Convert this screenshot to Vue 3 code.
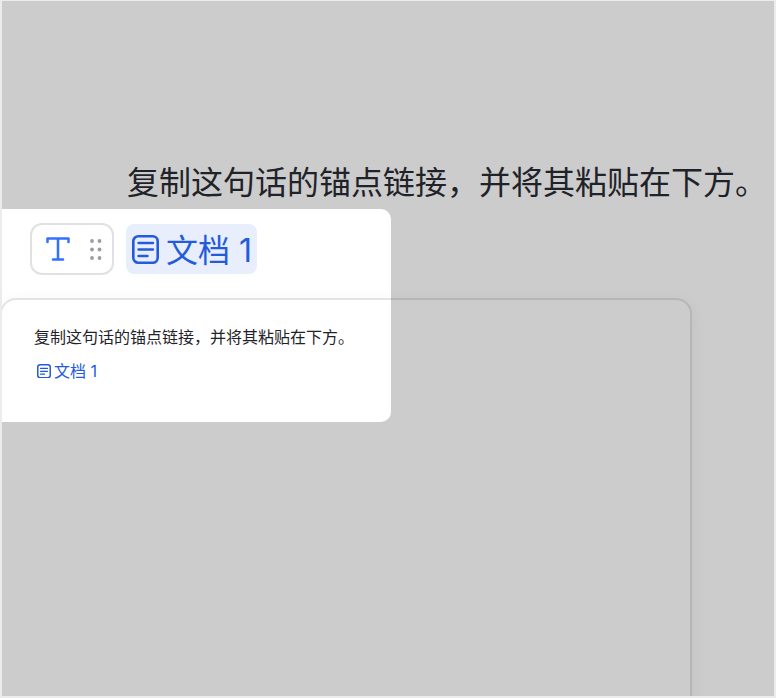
<template>
  <main class="page">
    <div class="stage">
      <h1 class="headline">复制这句话的锚点链接&#xFF0C;并将其粘贴在下方。</h1>

      <section class="spotlight">
        <div class="tools">
          <div class="handle">
            <svg class="t-icon" viewBox="0 0 24 24" fill="none">
              <path d="M1.5 5V1.5H22.5V5M12 1.5V22.5M7 22.5H17" stroke="currentColor" stroke-width="2.5" stroke-linecap="round" stroke-linejoin="round" />
            </svg>
            <svg class="dots" viewBox="0 0 12 21" fill="currentColor">
              <circle cx="2" cy="2" r="1.9" />
              <circle cx="9.5" cy="2" r="1.9" />
              <circle cx="2" cy="10.5" r="1.9" />
              <circle cx="9.5" cy="10.5" r="1.9" />
              <circle cx="2" cy="19" r="1.9" />
              <circle cx="9.5" cy="19" r="1.9" />
            </svg>
          </div>
          <a class="doc-chip">
            <svg class="doc-big" viewBox="0 0 27 29" fill="none">
              <rect x="1.3" y="1.3" width="24.4" height="26.4" rx="5" stroke="currentColor" stroke-width="2.6" />
              <path d="M6.5 8H21M6.5 14.5H21M6.5 21H15.5" stroke="currentColor" stroke-width="2.4" stroke-linecap="round" />
            </svg>
            <span class="doc-label">文档 1</span>
          </a>
        </div>
      </section>

      <section class="panel">
        <p class="panel-text">复制这句话的锚点链接&#xFF0C;并将其粘贴在下方。</p>
        <a class="panel-link">
          <svg class="doc-small" viewBox="0 0 14 14.5" fill="none">
            <rect x="0.75" y="0.75" width="12.5" height="13" rx="2.5" stroke="currentColor" stroke-width="1.5" />
            <path d="M3.5 4.4H10.5M3.5 7.3H10.5M3.5 10.2H7.5" stroke="currentColor" stroke-width="1.3" stroke-linecap="round" />
          </svg>
          <span>文档 1</span>
        </a>
      </section>
    </div>
  </main>
</template>

<script setup>
</script>

<style>
html,
body {
  margin: 0;
  background: #ececec;
}
</style>

<style scoped>
.page {
  box-sizing: border-box;
  width: 776px;
  height: 698px;
  padding: 1px 2px 2px 2px;
  font-family: "Inter", "Noto Sans CJK SC", sans-serif;
}

.stage {
  position: relative;
  height: 100%;
  overflow: hidden;
  background: #cccccc;
}

.headline {
  margin: 0;
  padding: 160px 0 0 125px;
  font-size: 32px;
  line-height: 44px;
  font-weight: 400;
  white-space: nowrap;
  color: #1f2329;
}

.spotlight {
  position: absolute;
  left: 0;
  top: 208px;
  width: 389px;
  height: 213px;
  border-radius: 0 10px 10px 0;
  background: #ffffff;
}

.tools {
  display: flex;
  align-items: center;
  gap: 12px;
  padding: 14px 0 0 28px;
}

.handle {
  box-sizing: border-box;
  display: flex;
  align-items: center;
  gap: 20px;
  width: 84px;
  height: 52px;
  padding-left: 14px;
  border: 2px solid #e0e1e5;
  border-radius: 12px;
  background: #ffffff;
}

.t-icon {
  width: 24px;
  height: 24px;
  color: #3370ff;
}

.dots {
  width: 12px;
  height: 21px;
  color: #9a9ca3;
}

.doc-chip {
  display: flex;
  align-items: center;
  gap: 7px;
  height: 50px;
  padding: 0 5px 0 6px;
  border-radius: 8px;
  background: #e8eefc;
  color: #245bdb;
  font-size: 32px;
  line-height: 44px;
}

.doc-label {
  padding-top: 4px;
}

.doc-big {
  width: 27px;
  height: 29px;
}

.panel {
  position: absolute;
  left: -2px;
  top: 297px;
  box-sizing: border-box;
  width: 692px;
  height: 500px;
  padding: 25px 32px;
  border: 2px solid rgba(31, 35, 41, 0.13);
  border-radius: 16px;
  box-shadow: 0 4px 16px rgba(31, 35, 41, 0.06);
}

.panel-text {
  margin: 0;
  font-size: 16px;
  line-height: 24px;
  white-space: nowrap;
  color: #1f2329;
}

.panel-link {
  display: flex;
  align-items: center;
  gap: 3px;
  margin-top: 10px;
  padding-left: 3px;
  font-size: 16px;
  line-height: 24px;
  color: #245bdb;
}

.doc-small {
  width: 14px;
  height: 14.5px;
}
</style>
